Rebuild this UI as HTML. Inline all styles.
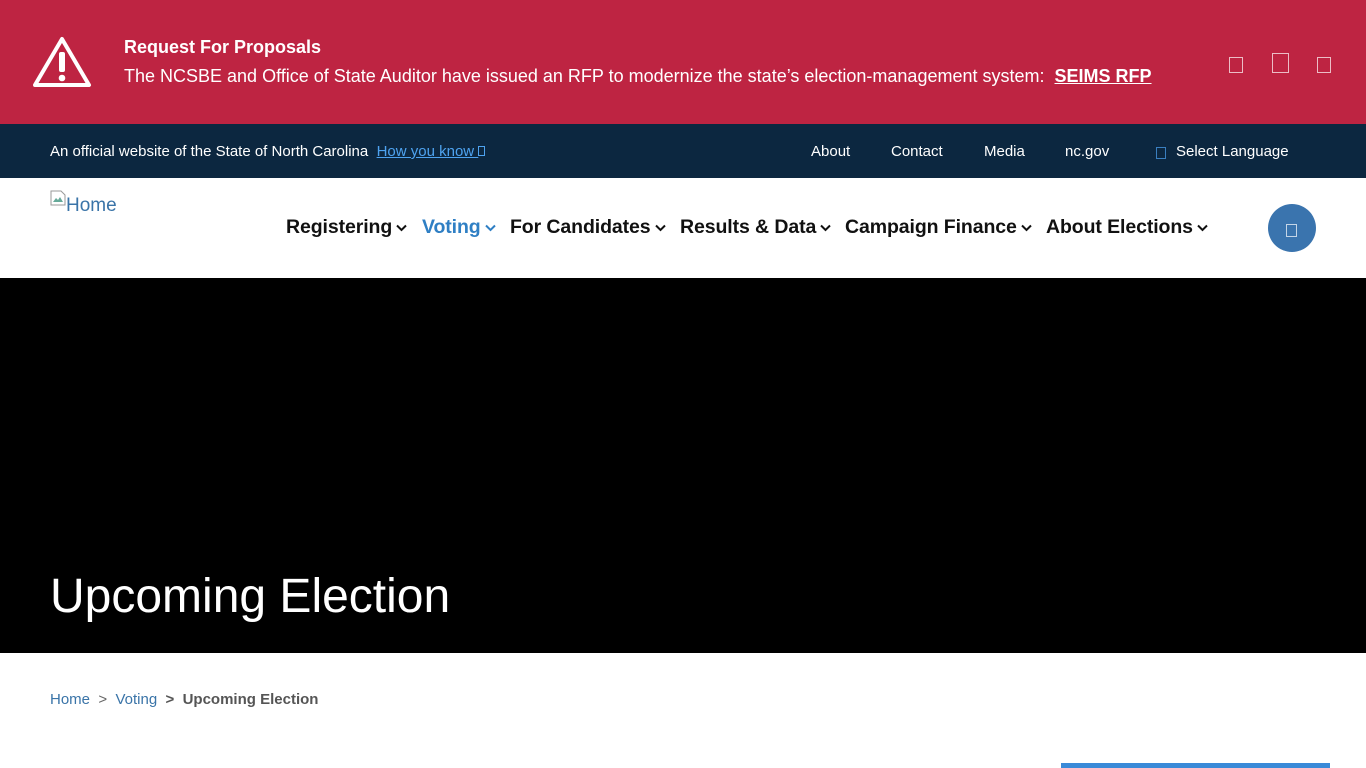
<!DOCTYPE html>
<html><head><meta charset="utf-8"><style>
*{margin:0;padding:0;box-sizing:border-box}
body{width:1366px;height:768px;overflow:hidden;font-family:"Liberation Sans",Arial,sans-serif;background:#fff;position:relative}
.abs{position:absolute}
.box{position:absolute;border:1.5px solid rgba(255,255,255,.7)}
.nav span{position:absolute;top:216px;font-size:19.5px;font-weight:bold;color:#111;white-space:nowrap;letter-spacing:-0.1px}
.nav svg{margin-left:4px;vertical-align:middle}
</style></head><body>
<div class="abs" style="left:0;top:0;width:1366px;height:124px;background:#be2442"></div>
<svg class="abs" style="left:31px;top:35px" width="62" height="54" viewBox="0 0 62 54"><path d="M31 4 L58 50 L4 50 Z" fill="none" stroke="#fff" stroke-width="4" stroke-linejoin="round"/><rect x="28" y="17" width="6" height="20" rx="2" fill="#fff"/><circle cx="31" cy="43" r="3.3" fill="#fff"/></svg>
<div class="abs" style="left:124px;top:37px;color:#fff;font-size:18px;font-weight:bold">Request For Proposals</div>
<div class="abs" style="left:124px;top:66px;color:#fff;font-size:18px;white-space:nowrap">The NCSBE and Office of State Auditor have issued an RFP to modernize the state’s election-management system: &nbsp;<b style="text-decoration:underline">SEIMS RFP</b></div>
<div class="box" style="left:1229px;top:57px;width:14px;height:16px"></div>
<div class="box" style="left:1272px;top:53px;width:17px;height:20px"></div>
<div class="box" style="left:1317px;top:57px;width:14px;height:16px"></div>
<div class="abs" style="left:0;top:124px;width:1366px;height:54px;background:#0c2740"></div>
<div class="abs" style="left:50px;top:143px;color:#fff;font-size:15px;white-space:nowrap">An official website of the State of North Carolina &nbsp;<span style="color:#4ea3f0;text-decoration:underline">How you know <span style="display:inline-block;width:7px;height:10px;border:1px solid #4ea3f0"></span></span></div>
<div class="abs" style="left:811px;top:143px;color:#fff;font-size:15px">About</div>
<div class="abs" style="left:891px;top:143px;color:#fff;font-size:15px">Contact</div>
<div class="abs" style="left:984px;top:143px;color:#fff;font-size:15px">Media</div>
<div class="abs" style="left:1065px;top:143px;color:#fff;font-size:15px">nc.gov</div>
<div class="abs" style="left:1156px;top:147px;width:10px;height:12px;border:1px solid #3a7fc0"></div>
<div class="abs" style="left:1176px;top:143px;color:#fff;font-size:15px">Select Language</div>
<svg class="abs" style="left:50px;top:190px" width="16" height="16" viewBox="0 0 16 16"><path d="M1 1h10l4 4v10H1z" fill="#fff" stroke="#999"/><path d="M3 12l3-4 2 2 2-3 3 5z" fill="#6a9"/></svg>
<div class="abs" style="left:66px;top:195px;color:#3a74a8;font-size:19px">Home</div>
<div class="nav">
<span style="left:286px">Registering<svg width="11" height="8" viewBox="0 0 11 8"><path d="M1 1.5 5.5 6 10 1.5" fill="none" stroke="#111" stroke-width="2"/></svg></span>
<span style="left:422px;color:#2f7fc4">Voting<svg width="11" height="8" viewBox="0 0 11 8"><path d="M1 1.5 5.5 6 10 1.5" fill="none" stroke="#2f7fc4" stroke-width="2"/></svg></span>
<span style="left:510px">For Candidates<svg width="11" height="8" viewBox="0 0 11 8"><path d="M1 1.5 5.5 6 10 1.5" fill="none" stroke="#111" stroke-width="2"/></svg></span>
<span style="left:680px">Results &amp; Data<svg width="11" height="8" viewBox="0 0 11 8"><path d="M1 1.5 5.5 6 10 1.5" fill="none" stroke="#111" stroke-width="2"/></svg></span>
<span style="left:845px">Campaign Finance<svg width="11" height="8" viewBox="0 0 11 8"><path d="M1 1.5 5.5 6 10 1.5" fill="none" stroke="#111" stroke-width="2"/></svg></span>
<span style="left:1046px">About Elections<svg width="11" height="8" viewBox="0 0 11 8"><path d="M1 1.5 5.5 6 10 1.5" fill="none" stroke="#111" stroke-width="2"/></svg></span>
</div>
<div class="abs" style="left:1268px;top:204px;width:48px;height:48px;border-radius:50%;background:#3a74ae"></div>
<div class="box" style="left:1286px;top:224px;width:11px;height:13px"></div>
<div class="abs" style="left:0;top:278px;width:1366px;height:375px;background:#000"></div>
<div class="abs" style="left:50px;top:569px;color:#fff;font-size:48px">Upcoming Election</div>
<div class="abs" style="left:50px;top:691px;font-size:15px;color:#3a74a8;white-space:nowrap">Home &nbsp;<span style="color:#666">&gt;</span>&nbsp; Voting &nbsp;<b style="color:#555">&gt; &nbsp;Upcoming Election</b></div>
<div class="abs" style="left:1061px;top:763px;width:269px;height:5px;background:#3a8ad8"></div>
</body></html>
